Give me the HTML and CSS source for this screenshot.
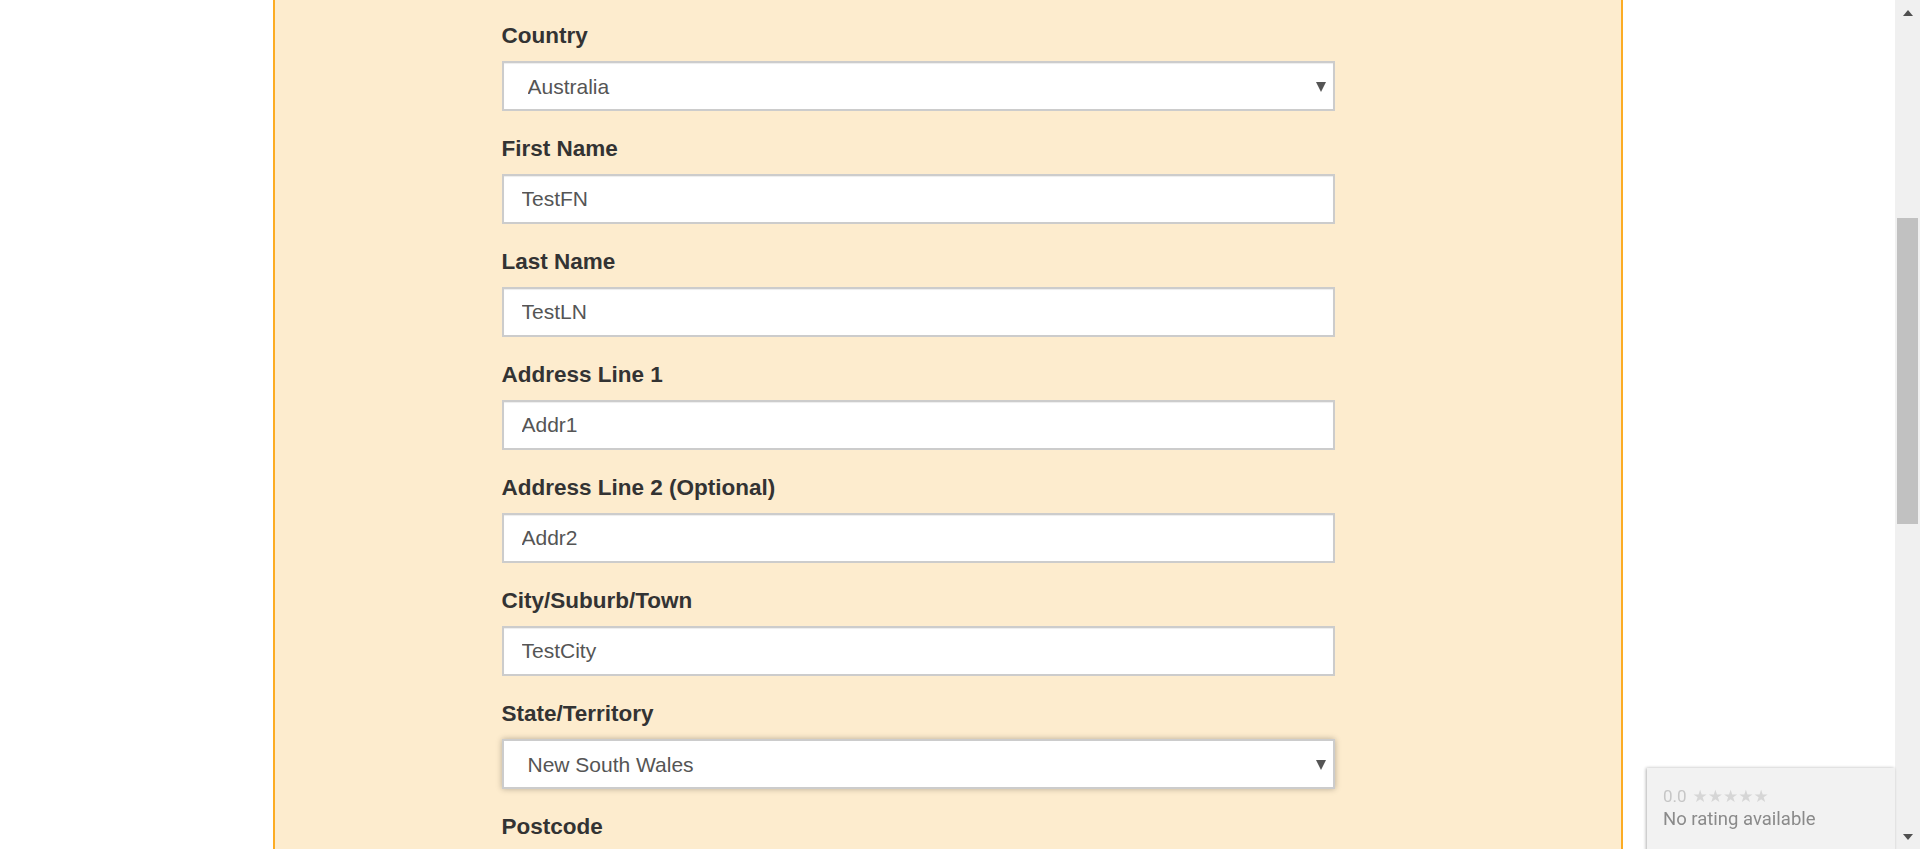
FILE: index.html
```html
<!DOCTYPE html>
<html lang="en">
<head>
<meta charset="utf-8">
<title>Address form</title>
<link rel="stylesheet" href="styles.css">
</head>
<body>
<div class="viewport">
  <main class="page">
    <section class="panel">
      <form class="form">
        <div class="group">
          <label class="label">Country</label>
          <span class="select-wrap">
            <select class="control select"><option>Australia</option></select>
          </span>
        </div>
        <div class="group">
          <label class="label">First Name</label>
          <input class="control" type="text" value="TestFN">
        </div>
        <div class="group">
          <label class="label">Last Name</label>
          <input class="control" type="text" value="TestLN">
        </div>
        <div class="group">
          <label class="label">Address Line 1</label>
          <input class="control" type="text" value="Addr1">
        </div>
        <div class="group">
          <label class="label">Address Line 2 (Optional)</label>
          <input class="control" type="text" value="Addr2">
        </div>
        <div class="group">
          <label class="label">City/Suburb/Town</label>
          <input class="control" type="text" value="TestCity">
        </div>
        <div class="group">
          <label class="label">State/Territory</label>
          <span class="select-wrap">
            <select class="control select focused"><option>New South Wales</option></select>
          </span>
        </div>
        <div class="group">
          <label class="label">Postcode</label>
          <input class="control" type="text" value="2000">
        </div>
      </form>
    </section>
  </main>
  <div class="scrollbar">
    <div class="sb-btn"><span class="sb-up"></span></div>
    <div class="sb-track"><div class="sb-thumb"></div></div>
    <div class="sb-btn"><span class="sb-down"></span></div>
  </div>
</div>
<aside class="rating">
  <div class="rating-score"><span class="score">0.0</span><span class="stars">★★★★★</span></div>
  <div class="rating-text">No rating available</div>
</aside>
</body>
</html>
```
FILE: styles.css
```css
html, body {
  margin: 0;
  padding: 0;
  height: 100%;
  overflow: hidden;
  background: #ffffff;
}

.viewport {
  display: flex;
  height: 849px;
  width: 1920px;
}

.page {
  flex: 1;
  height: 849px;
  overflow: hidden;
}

.panel {
  width: 1350px;
  margin: 0 auto;
  background: #fdecce;
  border-left: 2px solid #fcac24;
  border-right: 2px solid #fcac24;
  padding: 24px 0 40px 227px;
  box-sizing: border-box;
  min-height: 900px;
}

.form {
  width: 833px;
  font-family: "Liberation Sans", Arial, sans-serif;
}

.group {
  margin-bottom: 26px;
}

.label {
  display: block;
  font-size: 22.5px;
  line-height: 24px;
  font-weight: bold;
  color: #333333;
  margin-bottom: 13px;
}

.control {
  display: block;
  width: 100%;
  height: 50px;
  box-sizing: border-box;
  border: 2px solid #cccccc;
  border-radius: 0;
  background: #ffffff;
  box-shadow: inset 0 1px 1px rgba(0, 0, 0, 0.075);
  padding: 0 18px;
  margin: 0;
  font-family: "Liberation Sans", Arial, sans-serif;
  font-size: 21px;
  color: #555555;
  outline: none;
}

.select-wrap {
  display: block;
  position: relative;
}

.select {
  -webkit-appearance: none;
  appearance: none;
  padding: 0 40px 0 24px;
}

.select-wrap::after {
  content: "";
  position: absolute;
  right: 9px;
  top: 21px;
  width: 0;
  height: 0;
  border-left: 5px solid transparent;
  border-right: 5px solid transparent;
  border-top: 10px solid #555555;
  pointer-events: none;
}

.select.focused {
  box-shadow: 0 0 6px rgba(0, 0, 0, 0.28);
}

.scrollbar {
  width: 25px;
  height: 849px;
  background: #f0f0f0;
  display: flex;
  flex-direction: column;
}

.sb-btn {
  height: 25px;
  display: flex;
  align-items: center;
  justify-content: center;
}

.sb-up {
  width: 0;
  height: 0;
  border-left: 5.5px solid transparent;
  border-right: 5.5px solid transparent;
  border-bottom: 6px solid #505050;
}

.sb-down {
  width: 0;
  height: 0;
  border-left: 5.5px solid transparent;
  border-right: 5.5px solid transparent;
  border-top: 6px solid #505050;
}

.sb-track {
  flex: 1;
  padding: 193px 2px 0 2px;
}

.sb-thumb {
  height: 306px;
  background: #c1c1c1;
}

.rating {
  position: fixed;
  left: 1647px;
  top: 768px;
  width: 248px;
  height: 120px;
  background: #f2f2f2;
  box-shadow: -1px 0 3px rgba(0, 0, 0, 0.3);
  padding: 17px 0 0 16px;
  box-sizing: border-box;
  font-family: Roboto, "Liberation Sans", Arial, sans-serif;
}

.rating-score {
  font-size: 17px;
  line-height: 22px;
  color: #c6c6c6;
  display: flex;
  align-items: center;
  gap: 6px;
}

.stars {
  color: #d6d6d6;
  font-family: "DejaVu Sans", sans-serif;
  font-size: 17px;
  letter-spacing: 0px;
}

.rating-text {
  font-size: 18.5px;
  line-height: 24px;
  color: #8a8a8a;
}
```
